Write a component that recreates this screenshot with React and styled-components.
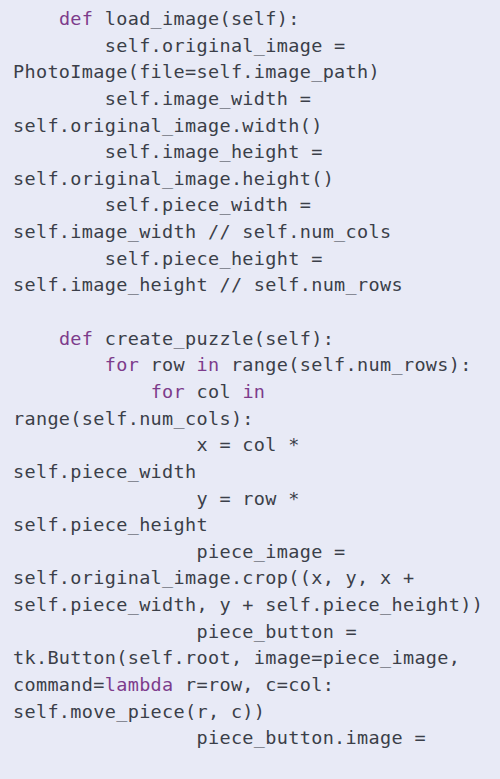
import React from 'react';
import styled, { createGlobalStyle } from 'styled-components';

const GlobalStyle = createGlobalStyle`
  html, body {
    margin: 0;
    padding: 0;
    background: #e8eaf6;
  }
`;

const CodeBlock = styled.pre`
  margin: 0;
  padding: 6px 13px 0;
  min-height: 779px;
  box-sizing: border-box;
  background: #e8eaf6;
  color: #3b3f49;
  font-family: 'DejaVu Sans Mono', 'Liberation Mono', monospace;
  font-size: 18.5px;
  letter-spacing: 0.33px;
  line-height: 26.65px;
  white-space: pre;
  overflow: hidden;
`;

const Line = styled.div`
  height: 26.65px;
`;

const Keyword = styled.span`
  color: #7d3c8c;
`;

// each line: array of [text, isKeyword]
const lines = [
  [['    '], ['def', true], [' load_image(self):']],
  [['        self.original_image =']],
  [['PhotoImage(file=self.image_path)']],
  [['        self.image_width =']],
  [['self.original_image.width()']],
  [['        self.image_height =']],
  [['self.original_image.height()']],
  [['        self.piece_width =']],
  [['self.image_width // self.num_cols']],
  [['        self.piece_height =']],
  [['self.image_height // self.num_rows']],
  [],
  [['    '], ['def', true], [' create_puzzle(self):']],
  [['        '], ['for', true], [' row '], ['in', true], [' range(self.num_rows):']],
  [['            '], ['for', true], [' col '], ['in', true]],
  [['range(self.num_cols):']],
  [['                x = col *']],
  [['self.piece_width']],
  [['                y = row *']],
  [['self.piece_height']],
  [['                piece_image =']],
  [['self.original_image.crop((x, y, x +']],
  [['self.piece_width, y + self.piece_height))']],
  [['                piece_button =']],
  [['tk.Button(self.root, image=piece_image,']],
  [['command='], ['lambda', true], [' r=row, c=col:']],
  [['self.move_piece(r, c))']],
  [['                piece_button.image =']],
];

export default function App() {
  return (
    <>
      <GlobalStyle />
      <CodeBlock>
        {lines.map((parts, i) => (
          <Line key={i}>
            {parts.map(([text, kw], j) =>
              kw ? <Keyword key={j}>{text}</Keyword> : <span key={j}>{text}</span>
            )}
          </Line>
        ))}
      </CodeBlock>
    </>
  );
}
